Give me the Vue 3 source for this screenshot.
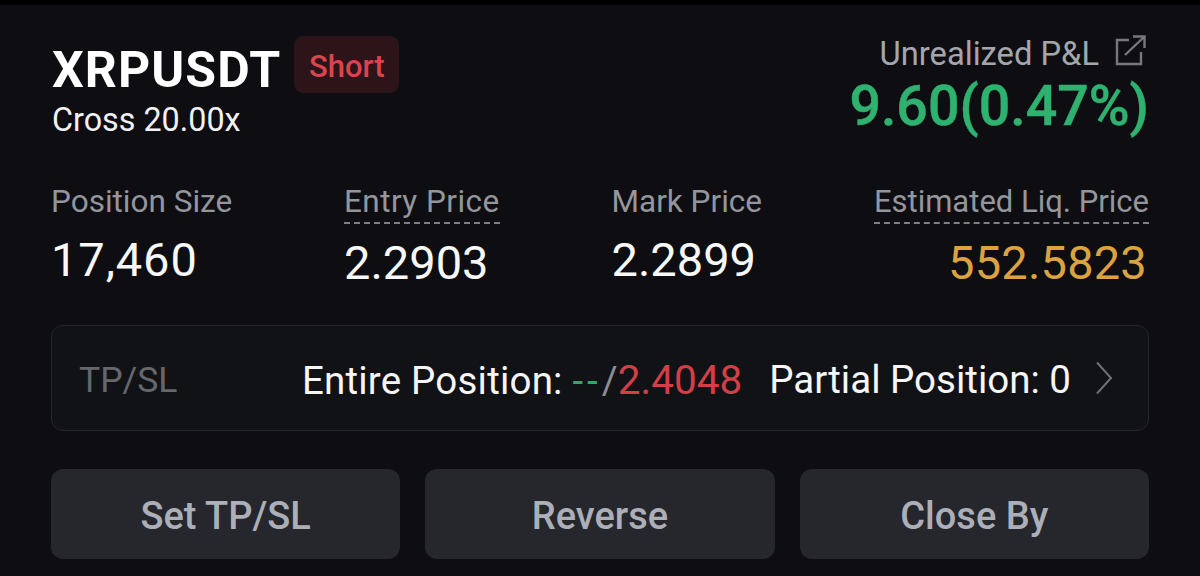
<script setup>
const stats = [
  { label: 'Position Size', value: '17,460', dotted: false, cls: 'wide' },
  { label: 'Entry Price', value: '2.2903', dotted: true, cls: 'entry' },
  { label: 'Mark Price', value: '2.2899', dotted: false, cls: '' },
  { label: 'Estimated Liq. Price', value: '552.5823', dotted: true, cls: 'liq' }
]
const actions = ['Set TP/SL', 'Reverse', 'Close By']
</script>

<template>
  <div class="page">
    <header class="head">
      <div class="head-left">
        <div class="title-row">
          <span class="symbol">XRPUSDT</span>
          <span class="badge">Short</span>
        </div>
        <div class="margin">Cross 20.00x</div>
      </div>
      <div class="head-right">
        <div class="pnl-label">
          <span>Unrealized P&amp;L</span>
          <svg class="share" width="32" height="32" viewBox="0 0 32 32" fill="none" stroke="#77787c" stroke-width="2.4">
            <path d="M15 6H3V30H27V18" />
            <path d="M11 21L30 3M19 2.5H30.5V14" />
          </svg>
        </div>
        <div class="pnl">9.60(0.47%)</div>
      </div>
    </header>

    <section class="stats">
      <div v-for="s in stats" :key="s.label" class="stat" :class="s.cls">
        <span class="label" :class="{ dotted: s.dotted }">{{ s.label }}</span>
        <span class="value">{{ s.value }}</span>
      </div>
    </section>

    <section class="tpsl">
      <span class="tpsl-title">TP/SL</span>
      <span class="tpsl-info">
        <span class="entire">Entire Position: <span class="green">--</span><span class="slash">/</span><span class="red">2.4048</span></span>
        <span class="partial">Partial Position: 0</span>
        <svg class="chev" width="18" height="34" viewBox="0 0 18 34" fill="none" stroke="#6f7074" stroke-width="2">
          <path d="M2 1.5L16 17L2 32.5" />
        </svg>
      </span>
    </section>

    <section class="actions">
      <button v-for="a in actions" :key="a" class="btn" type="button">{{ a }}</button>
    </section>
  </div>
</template>

<style>
html, body { margin: 0; background: #0e0e12; }
</style>

<style scoped>
.page {
  box-sizing: border-box;
  width: 1200px;
  height: 576px;
  overflow: hidden;
  background: #0e0e12;
  border-top: 5px solid #000;
  padding: 0 51px;
  font-family: Roboto, "Liberation Sans", sans-serif;
  color: #fff;
}
.head {
  display: flex;
  justify-content: space-between;
  padding-top: 30px;
  height: 120px;
  box-sizing: border-box;
}
.title-row {
  display: flex;
  align-items: center;
  gap: 13px;
  height: 58px;
}
.symbol {
  font-size: 50px;
  font-weight: 700;
  letter-spacing: 1.1px;
  line-height: 62px;
  height: 58px;
  padding-top: 4px;
  box-sizing: border-box;
  padding-left: 1px;
}
.badge {
  background: #2c1418;
  color: #d9454f;
  border-radius: 9px;
  font-size: 31px;
  font-weight: 500;
  width: 105px;
  height: 57px;
  line-height: 61px;
  text-align: center;
}
.margin {
  font-size: 32.3px;
  line-height: 38px;
  color: #f2f2f4;
  margin-top: 8px;
  padding-left: 1px;
}
.head-right {
  display: flex;
  flex-direction: column;
  align-items: flex-end;
}
.pnl-label {
  display: flex;
  align-items: center;
  gap: 15px;
  color: #a4a6ad;
  font-size: 32.7px;
  line-height: 40px;
  margin-top: -1px;
}
.share { margin-right: 3px; margin-top: -8px; }
.pnl {
  color: #2fb170;
  font-size: 55.5px;
  font-weight: 500;
  -webkit-text-stroke: 0.5px #2fb170;
  line-height: 64px;
  margin-top: 1px;
}
.stats {
  display: flex;
  justify-content: space-between;
  padding-top: 58px;
  height: 200px;
  box-sizing: border-box;
}
.stat {
  display: flex;
  flex-direction: column;
  align-items: flex-start;
  height: 100px;
}
.stat:last-child { align-items: flex-end; }
.label {
  color: #94969d;
  font-size: 31.5px;
  line-height: 38px;
  padding-bottom: 2px;
}
.dotted {
  border-bottom: 2px dashed #7d7f85;
  padding-bottom: 1px;
}
.entry .label { letter-spacing: 0.45px; }
.liq .label { font-size: 31px; }
.value {
  font-size: 47px;
  line-height: 50px;
  color: #f8f8f8;
  margin-top: 12px;
}
.wide .value { letter-spacing: 0.9px; }
.liq .value {
  color: #dba23f;
  letter-spacing: 0.2px;
  padding-right: 2px;
}
.entry .value,
.liq .value { margin-top: 14px; }
.tpsl {
  display: flex;
  justify-content: space-between;
  align-items: center;
  box-sizing: border-box;
  height: 106px;
  border: 1px solid #25262b;
  background: #111216;
  border-radius: 12px;
  padding: 3px 35px 0 27px;
  font-size: 38.5px;
}
.tpsl-title { color: #66676c; font-size: 35.5px; }
.tpsl-info {
  display: flex;
  align-items: center;
  color: #f6f6f7;
}
.entire { letter-spacing: 0.2px; }
.green { color: #2fa868; letter-spacing: 4px; }
.red { color: #d23f47; font-size: 40.5px; letter-spacing: 0; }
.slash { color: #8d8e92; }
.partial { margin-left: 27px; }
.chev { margin-left: 24px; margin-top: -3px; }
.actions {
  display: flex;
  gap: 25px;
  margin-top: 38px;
}
.btn {
  flex: 1;
  height: 90px;
  background: #25272d;
  border: none;
  border-radius: 12px;
  color: #acafb7;
  font-family: inherit;
  font-size: 38px;
  font-weight: 500;
  padding: 4px 0 0;
}
</style>
